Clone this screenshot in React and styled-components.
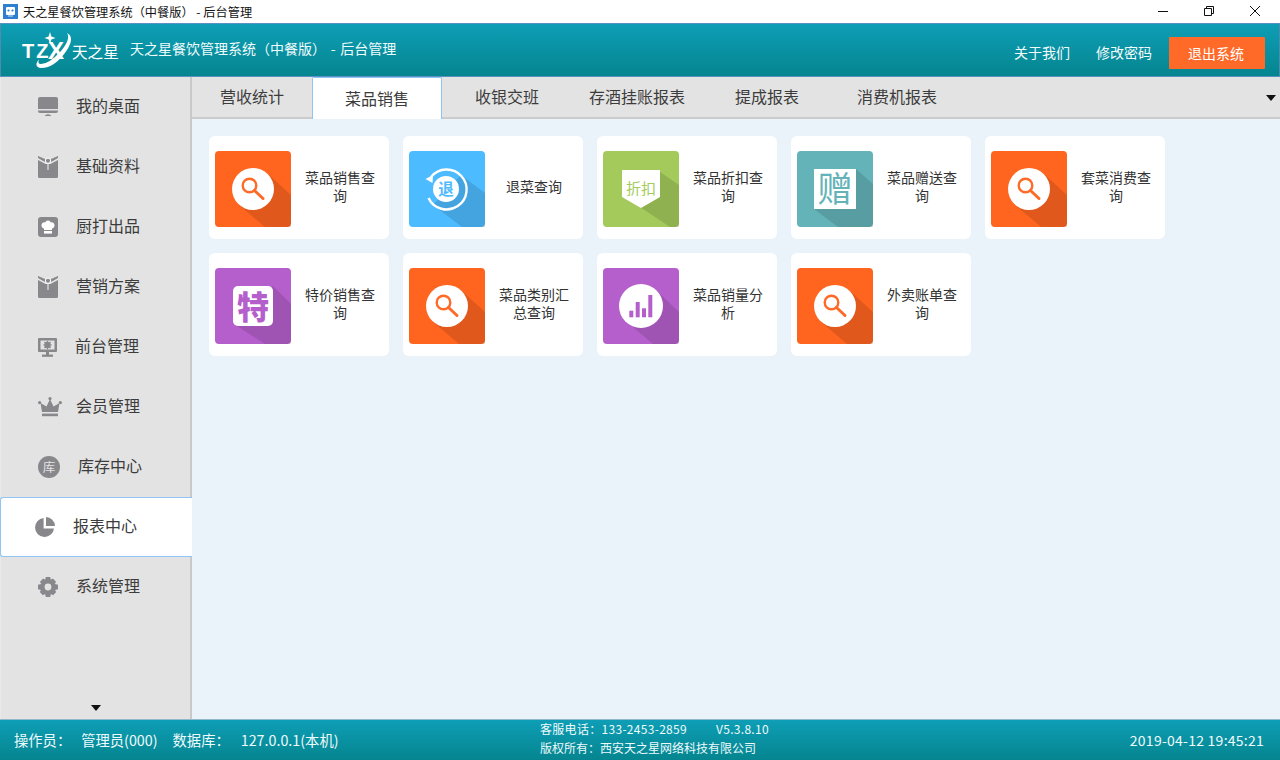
import React from "react";
import styled, { createGlobalStyle } from "styled-components";

const FONT = `"Noto Sans CJK SC", "Noto Sans", sans-serif`;

const GlobalStyle = createGlobalStyle`
  html, body {
    margin: 0;
    padding: 0;
    background: #fff;
    font-family: ${FONT};
  }
`;

const Page = styled.div`
  width: 1280px;
  height: 760px;
  display: flex;
  flex-direction: column;
  overflow: hidden;
  background: #eaf3f9;
`;

const TitleBar = styled.div`
  height: 23px;
  flex: none;
  display: flex;
  align-items: center;
  padding-left: 3px;
  background: #fff;
`;

const TitleText = styled.span`
  margin-left: 5px;
  font-size: 12.2px;
  color: #111;
`;

const WinButtons = styled.div`
  margin-left: auto;
  margin-bottom: 2px;
  display: flex;
  align-items: center;
  padding-right: 19px;
  gap: 34px;
`;

const Header = styled.header`
  height: 54px;
  flex: none;
  box-sizing: border-box;
  display: flex;
  align-items: center;
  padding: 0 14px 0 20px;
  border: 1px solid #5b90c2;
  border-left-color: #4d8bb0;
  border-right-color: #4d8bb0;
  background: linear-gradient(#0e9eb6, #05858f);
  color: #fff;
`;

const LogoBox = styled.div`
  display: flex;
  align-items: center;
  width: 109px;
  height: 44px;
`;

const HeaderTitle = styled.span`
  font-size: 14px;
  color: #f0fbfc;
  padding-bottom: 4px;
  word-spacing: 1.5px;
`;

const HeaderLinks = styled.div`
  margin-left: auto;
  display: flex;
  align-items: center;
`;

const HeaderLink = styled.a`
  font-size: 14px;
  color: #f2fbfc;
  margin-right: ${(p) => p.$gap}px;
  padding-top: 3px;
`;

const LogoutButton = styled.button`
  width: 96px;
  height: 32px;
  margin-top: 6px;
  border: 0;
  border-radius: 1px;
  background: #ff6a28;
  color: #fff;
  font-family: ${FONT};
  font-size: 14px;
  padding: 0 2px 0 0;
`;

const Body = styled.div`
  flex: 1;
  min-height: 0;
  display: flex;
`;

const Sidebar = styled.nav`
  width: 192px;
  flex: none;
  display: flex;
  flex-direction: column;
  background: #e3e3e3;
  box-shadow: inset -2px 0 0 #c9c9c9;
  border-left: 1px solid #e9e9e9;
  box-sizing: border-box;
`;

const NavItem = styled.div`
  height: 60px;
  flex: none;
  box-sizing: border-box;
  display: flex;
  align-items: center;
  padding-left: ${(p) => p.$left}px;
  gap: ${(p) => p.$gap}px;
  font-size: 16px;
  color: #3c3c3c;
  ${(p) =>
    p.$active &&
    `
    background: #fff;
    border: 1px solid #8ec5f5;
    border-right: 0;
    border-radius: 3px 0 0 3px;
    margin-left: -1px;
  `}
`;

const NavLabel = styled.span`
  padding-bottom: 4px;
`;

const NavList = styled.div`
  display: flex;
  flex-direction: column;
`;

const DownArrow = styled.i`
  display: block;
  width: 0;
  height: 0;
  border-left: 5px solid transparent;
  border-right: 5px solid transparent;
  border-top: 6px solid #111;
`;

const SideArrow = styled(DownArrow)`
  margin: auto 0 8px 90px;
`;

const Main = styled.main`
  flex: 1;
  min-width: 0;
  display: flex;
  flex-direction: column;
`;

const TabBar = styled.div`
  height: 42px;
  flex: none;
  box-sizing: border-box;
  display: flex;
  align-items: stretch;
  background: #e3e3e3;
  border-bottom: 2px solid #cbcbcb;
`;

const Tab = styled.div`
  width: ${(p) => p.$width}px;
  flex: none;
  box-sizing: border-box;
  display: flex;
  align-items: center;
  justify-content: center;
  font-size: 16px;
  color: #3c3c3c;
  padding-bottom: 2px;
  ${(p) =>
    p.$active &&
    `
    height: 42px;
    background: #fff;
    border: 1px solid #8ec5f5;
    border-bottom: 0;
    border-radius: 2px 2px 0 0;
  `}
`;

const TabArrow = styled(DownArrow)`
  margin: 18px 4px 0 auto;
`;

const Grid = styled.div`
  display: grid;
  grid-template-columns: repeat(5, 180px);
  grid-auto-rows: 103px;
  gap: 14px;
  padding: 17px 0 0 17px;
`;

const Card = styled.div`
  display: flex;
  align-items: center;
  box-sizing: border-box;
  padding: 3px 0 0 6px;
  background: #fff;
  border-radius: 6px;
`;

const CardLabel = styled.div`
  flex: 1;
  padding: 0 9px;
  margin-top: -6px;
  text-align: center;
  font-size: 14px;
  line-height: 18px;
  color: #333;
`;

const TileSvg = styled.svg`
  display: block;
  flex: none;
  width: 76px;
  height: 76px;
`;

const Footer = styled.footer`
  height: 41px;
  flex: none;
  box-sizing: border-box;
  display: flex;
  align-items: center;
  padding: 0 16px 0 14px;
  border-top: 1px solid #8fb8c8;
  background: linear-gradient(#0e9eb6, #05858f);
  color: #eefafb;
  font-size: 14.3px;
`;

const FootLeft = styled.div`
  width: 526px;
  flex: none;
  display: flex;
  align-items: center;
  padding-bottom: 2px;
`;

const FootItem = styled.span`
  margin-right: ${(p) => p.$gap}px;
  white-space: pre;
`;

const FootCenter = styled.div`
  display: flex;
  flex-direction: column;
  font-size: 12px;
  line-height: 19px;
  padding-bottom: 4px;
`;

const FootLine = styled.div`
  display: flex;
  gap: 29px;
  letter-spacing: ${(p) => p.$spacing || 0}px;
`;

const FootRight = styled.div`
  margin-left: auto;
  font-size: 14px;
  letter-spacing: 0.25px;
`;

// tile artwork

const GREY = "#87878c";

const SearchArt = () => (
  <>
    <circle cx="38" cy="38" r="21" fill="#fff" />
    <circle cx="34.5" cy="34.5" r="6.8" fill="none" stroke="#ff6a28" strokeWidth="2.4" />
    <path d="M39.5 39.5 L48 47.5" stroke="#ff6a28" strokeWidth="3" strokeLinecap="round" />
  </>
);

const ReturnArt = () => (
  <>
    <path d="M22 26 A20 20 0 1 1 19.5 47" fill="none" stroke="#fff" strokeWidth="2.4" />
    <path d="M16.5 28 L24 24 L23.5 32 Z" fill="#fff" />
    <circle cx="37" cy="38" r="13" fill="#fff" />
    <text x="37" y="43.5" textAnchor="middle" fontSize="15.5" fontWeight="700" fill="#4dbbff" fontFamily={FONT}>
      退
    </text>
  </>
);

const DiscountArt = () => (
  <>
    <path d="M19 19 H57 V46 L38 57 L19 46 Z" fill="#fff" />
    <text x="38" y="42.5" textAnchor="middle" fontSize="15" fill="#a4cb5c" fontFamily={FONT}>
      折扣
    </text>
  </>
);

const GiftArt = () => (
  <>
    <rect x="17" y="18" width="42" height="40" fill="#fff" />
    <text x="38" y="51" textAnchor="middle" fontSize="35" fill="#64b3b8" fontFamily={FONT}>
      赠
    </text>
  </>
);

const SpecialArt = () => (
  <>
    <rect x="18" y="18" width="40" height="40" rx="5" fill="#fff" />
    <text x="38" y="50.5" textAnchor="middle" fontSize="32" fontWeight="900" fill="#b55fcc" fontFamily={FONT}>
      特
    </text>
  </>
);

const ChartArt = () => (
  <>
    <circle cx="38" cy="38" r="22" fill="#fff" />
    <rect x="26.3" y="42.7" width="4" height="6.6" fill="#b55fcc" />
    <rect x="32.7" y="34" width="4" height="15.3" fill="#b55fcc" />
    <rect x="39" y="40.3" width="4" height="9" fill="#b55fcc" />
    <rect x="45.3" y="27" width="4" height="22.3" fill="#b55fcc" />
  </>
);

const TILES = {
  search: { bg: "#ff651f", shadow: "M53 23 L76 44 V76 H50 L24 54 Z", Art: SearchArt },
  back: { bg: "#4dbbff", shadow: "M52 24 L76 42 V76 H53 L24 54 Z", Art: ReturnArt },
  discount: { bg: "#a3ca5b", shadow: "M57 21 L76 34 V76 H67 L37 56 Z", Art: DiscountArt },
  gift: { bg: "#63b3b8", shadow: "M59 18 L76 33 V76 H41 L17 58 Z", Art: GiftArt },
  special: { bg: "#b55fcc", shadow: "M58 18 L76 36 V76 H50 L22 58 Z", Art: SpecialArt },
  chart: { bg: "#b55fcc", shadow: "M54 23 L76 44 V76 H50 L24 54 Z", Art: ChartArt },
};

const Tile = ({ kind }) => {
  const { bg, shadow, Art } = TILES[kind];
  return (
    <TileSvg viewBox="0 0 76 76">
      <rect width="76" height="76" rx="4" fill={bg} />
      <path d={shadow} fill="#000" opacity="0.12" />
      <Art />
    </TileSvg>
  );
};

// sidebar icons

const DeskIcon = () => (
  <svg width="20" height="20" viewBox="0 0 20 20">
    <path d="M2 0 H18 Q20 0 20 2 V12 H0 V2 Q0 0 2 0 Z" fill={GREY} />
    <path d="M0 13.5 H20 V14 Q20 16 18 16 H2 Q0 16 0 14 Z" fill={GREY} />
    <path d="M7 19 Q7 17.3 10 17.3 Q13 17.3 13 19 Z" fill={GREY} />
  </svg>
);

const BagIcon = () => (
  <svg width="20" height="22" viewBox="0 0 20 22">
    <path d="M0 4 L7.5 8 H12.5 L20 4 V20.5 Q20 22 18.5 22 H1.5 Q0 22 0 20.5 Z" fill={GREY} />
    <path d="M0 0 L7 3 H13 L20 0 V2 L13 6 H7 L0 2 Z" fill={GREY} />
    <circle cx="10" cy="4.8" r="2.6" fill={GREY} stroke="#f4f4f4" strokeWidth="1.1" />
    <path d="M10 8 V14" stroke="#f4f4f4" strokeWidth="1" />
  </svg>
);

const ChefIcon = () => (
  <svg width="20" height="20" viewBox="0 0 20 20">
    <rect width="20" height="20" rx="3" fill={GREY} />
    <path d="M6 11.5 Q3 10.5 3.6 7.5 Q4.3 5 7 5.4 Q8 3.4 10 3.4 Q12 3.4 13 5.4 Q15.7 5 16.4 7.5 Q17 10.5 14 11.5 V13 H6 Z" fill="#fff" />
    <rect x="6" y="14" width="8" height="2.6" fill="#fff" />
  </svg>
);

const ScreenIcon = () => (
  <svg width="19" height="19" viewBox="0 0 19 19">
    <path fillRule="evenodd" d="M1 0 H18 Q19 0 19 1 V13 Q19 14 18 14 H1 Q0 14 0 13 V1 Q0 0 1 0 Z M2.5 2.5 V11.5 H16.5 V2.5 Z" fill={GREY} />
    <circle cx="9.5" cy="7" r="3.2" fill={GREY} />
    <path d="M9.5 2.8 V11.2 M5.3 7 H13.7 M6.5 4 L12.5 10 M12.5 4 L6.5 10" stroke={GREY} strokeWidth="1.2" />
    <rect x="8" y="14" width="3" height="3" fill={GREY} />
    <rect x="4" y="16.6" width="11" height="2.2" fill={GREY} />
  </svg>
);

const CrownIcon = () => (
  <svg width="24" height="20" viewBox="0 0 24 20">
    <path d="M12 2 L15.5 9.5 L21.5 6 L20 15 H4 L2.5 6 L8.5 9.5 Z" fill={GREY} />
    <circle cx="12" cy="1.6" r="1.6" fill={GREY} />
    <circle cx="1.6" cy="5.6" r="1.6" fill={GREY} />
    <circle cx="22.4" cy="5.6" r="1.6" fill={GREY} />
    <rect x="4" y="16.6" width="16" height="2.6" fill={GREY} />
  </svg>
);

const StoreIcon = () => (
  <svg width="22" height="22" viewBox="0 0 22 22">
    <circle cx="11" cy="11" r="11" fill={GREY} />
    <text x="11" y="15.5" textAnchor="middle" fontSize="12.5" fill="#e3e3e3" fontFamily={FONT}>
      库
    </text>
  </svg>
);

const PieIcon = () => (
  <svg width="20" height="20" viewBox="0 0 20 20">
    <path d="M8.6 1 V11.4 H19 A9.5 9.5 0 1 1 8.6 1 Z" fill={GREY} />
    <path d="M11 0 A9.3 9.3 0 0 1 20 9 H11 Z" fill={GREY} />
  </svg>
);

const GearIcon = () => (
  <svg width="20" height="20" viewBox="0 0 20 20">
    <path
      fillRule="evenodd"
      fill={GREY}
      d="M7.8 0 H12.2 L12.8 2.8 L14.9 1.6 L18 4.7 L16.8 7 L20 7.8 V12.2 L17 12.9 L18.2 15.1 L15.1 18.2 L12.9 17 L12.2 20 H7.8 L7.1 17 L4.9 18.2 L1.8 15.1 L3 12.9 L0 12.2 V7.8 L3.2 7 L2 4.7 L5.1 1.6 L7.2 2.8 Z M10 6.6 A3.4 3.4 0 1 0 10 13.4 A3.4 3.4 0 1 0 10 6.6 Z"
    />
  </svg>
);

const NAV = [
  { label: "我的桌面", Icon: DeskIcon, left: 37, gap: 18 },
  { label: "基础资料", Icon: BagIcon, left: 37, gap: 18 },
  { label: "厨打出品", Icon: ChefIcon, left: 37, gap: 18 },
  { label: "营销方案", Icon: BagIcon, left: 37, gap: 18 },
  { label: "前台管理", Icon: ScreenIcon, left: 37, gap: 18 },
  { label: "会员管理", Icon: CrownIcon, left: 37, gap: 14 },
  { label: "库存中心", Icon: StoreIcon, left: 37, gap: 18 },
  { label: "报表中心", Icon: PieIcon, left: 34, gap: 18, active: true },
  { label: "系统管理", Icon: GearIcon, left: 37, gap: 18 },
];

const TABS = [
  { label: "营收统计", width: 120 },
  { label: "菜品销售", width: 130, active: true },
  { label: "收银交班", width: 130 },
  { label: "存酒挂账报表", width: 130 },
  { label: "提成报表", width: 130 },
  { label: "消费机报表", width: 130 },
];

const CARDS = [
  { label: "菜品销售查询", kind: "search" },
  { label: "退菜查询", kind: "back" },
  { label: "菜品折扣查询", kind: "discount" },
  { label: "菜品赠送查询", kind: "gift" },
  { label: "套菜消费查询", kind: "search" },
  { label: "特价销售查询", kind: "special" },
  { label: "菜品类别汇总查询", kind: "search" },
  { label: "菜品销量分析", kind: "chart" },
  { label: "外卖账单查询", kind: "search" },
];

const Logo = () => (
  <LogoBox>
    <svg width="109" height="44" viewBox="0 0 109 44">
      <path d="M18 31 Q12 39 20 40 Q34 40 46 22 Q54 9 46 5 Q50 11 40 23 Q28 36 20 36 Q16 36 18 31 Z" fill="#fff" />
      <path d="M29 4 L30.4 8.5 L34.5 10 L30.4 11.5 L29 16 L27.6 11.5 L23.5 10 L27.6 8.5 Z" fill="#fff" />
      <text x="1" y="30" fontSize="20" fontWeight="700" fill="#fff" fontFamily={`"Liberation Sans", sans-serif`} letterSpacing="2">
        TZ
      </text>
      <text x="27" y="31" fontSize="24" fontWeight="700" fill="#fff" fontFamily={`"Liberation Sans", sans-serif`}>
        X
      </text>
      <text x="51" y="30" fontSize="15.6" fill="#fff" fontFamily={FONT}>
        天之星
      </text>
    </svg>
  </LogoBox>
);

const App = () => {
  return (
    <Page>
      <GlobalStyle />
      <TitleBar>
        <svg width="15" height="15" viewBox="0 0 15 15">
          <rect width="15" height="15" fill="#2f7fd0" />
          <rect x="3" y="3" width="9" height="8" rx="1" fill="#fff" />
          <circle cx="5.5" cy="6.5" r="1.1" fill="#2f7fd0" />
          <circle cx="9.5" cy="6.5" r="1.1" fill="#2f7fd0" />
          <path d="M5 12 H10" stroke="#cfe2f5" strokeWidth="1" />
        </svg>
        <TitleText>天之星餐饮管理系统（中餐版） - 后台管理</TitleText>
        <WinButtons>
          <svg width="12" height="12" viewBox="0 0 12 12">
            <path d="M1 6.5 H11" stroke="#111" strokeWidth="1" />
          </svg>
          <svg width="12" height="12" viewBox="0 0 12 12">
            <path d="M1.5 3.5 H8.5 V10.5 H1.5 Z M3.5 3.5 V1.5 H10.5 V8.5 H8.5" fill="none" stroke="#111" strokeWidth="1" />
          </svg>
          <svg width="12" height="12" viewBox="0 0 12 12">
            <path d="M1 1 L11 11 M11 1 L1 11" stroke="#111" strokeWidth="1" />
          </svg>
        </WinButtons>
      </TitleBar>
      <Header>
        <Logo />
        <HeaderTitle>天之星餐饮管理系统（中餐版） - 后台管理</HeaderTitle>
        <HeaderLinks>
          <HeaderLink $gap={26}>关于我们</HeaderLink>
          <HeaderLink $gap={17}>修改密码</HeaderLink>
          <LogoutButton>退出系统</LogoutButton>
        </HeaderLinks>
      </Header>
      <Body>
        <Sidebar>
          <NavList>
            {NAV.map(({ label, Icon, left, gap, active }) => (
              <NavItem key={label} $left={left} $gap={gap} $active={active}>
                <Icon />
                <NavLabel>{label}</NavLabel>
              </NavItem>
            ))}
          </NavList>
          <SideArrow />
        </Sidebar>
        <Main>
          <TabBar>
            {TABS.map((tab) => (
              <Tab key={tab.label} $width={tab.width} $active={tab.active}>
                {tab.label}
              </Tab>
            ))}
            <TabArrow />
          </TabBar>
          <Grid>
            {CARDS.map((card) => (
              <Card key={card.label}>
                <Tile kind={card.kind} />
                <CardLabel>{card.label}</CardLabel>
              </Card>
            ))}
          </Grid>
        </Main>
      </Body>
      <Footer>
        <FootLeft>
          <FootItem $gap={10}>操作员：</FootItem>
          <FootItem $gap={15}>管理员(000)</FootItem>
          <FootItem $gap={11}>数据库：</FootItem>
          <FootItem $gap={0}>127.0.0.1(本机)</FootItem>
        </FootLeft>
        <FootCenter>
          <FootLine $spacing={0.3}>
            <span>客服电话：133-2453-2859</span>
            <span>V5.3.8.10</span>
          </FootLine>
          <FootLine>版权所有：西安天之星网络科技有限公司</FootLine>
        </FootCenter>
        <FootRight>2019-04-12 19:45:21</FootRight>
      </Footer>
    </Page>
  );
};

export default App;
